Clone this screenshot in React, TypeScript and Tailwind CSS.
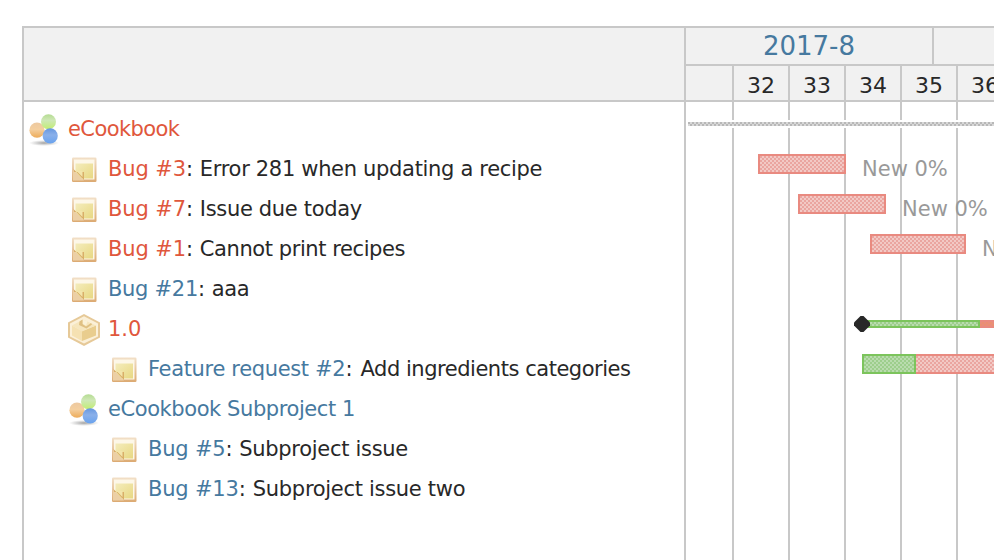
import type { ReactNode } from 'react';

const red = 'text-[#e0573c]';
const blue = 'text-[#46799f]';

function ProjectIcon() {
  return (
    <svg viewBox="0 0 32 32" className="size-8 shrink-0">
      <defs>
        <linearGradient id="og" x2="0" y2="1"><stop stopColor="#edc9a0" /><stop offset=".45" stopColor="#f4cf9f" /><stop offset="1" stopColor="#edab58" /></linearGradient>
        <linearGradient id="gg" x2="0" y2="1"><stop stopColor="#b5dc93" /><stop offset=".4" stopColor="#cfe8b6" /><stop offset="1" stopColor="#c1ed73" /></linearGradient>
        <linearGradient id="bg" x2="0" y2="1"><stop stopColor="#6596df" /><stop offset=".45" stopColor="#8ab0ea" /><stop offset="1" stopColor="#69a2ee" /></linearGradient>
        <radialGradient id="sh"><stop stopColor="#777" stopOpacity=".7" /><stop offset="1" stopColor="#999" stopOpacity="0" /></radialGradient>
      </defs>
      <ellipse cx="16" cy="29" rx="15" ry="3" fill="url(#sh)" />
      <circle cx="9" cy="16.2" r="7.6" fill="url(#og)" />
      <circle cx="20.5" cy="7.8" r="7.5" fill="url(#gg)" />
      <circle cx="22.2" cy="21.8" r="7.6" fill="url(#bg)" />
    </svg>
  );
}

function TicketIcon() {
  return (
    <svg viewBox="0 0 32 32" className="size-8 shrink-0">
      <defs>
        <linearGradient id="frame" x2="0" y2="1"><stop stopColor="#f2e0c8" /><stop offset="1" stopColor="#dcaa72" /></linearGradient>
        <linearGradient id="note" x2="1" y2="1"><stop stopColor="#f4ecbc" /><stop offset="1" stopColor="#e8d882" /></linearGradient>
      </defs>
      <rect x="4" y="3.5" width="24.5" height="24.5" rx="1.2" fill="url(#frame)" />
      <rect x="6" y="5.5" width="20.5" height="20" fill="#fdf7e8" />
      <path d="M7.5 9.5H25V24.5H7.5Z" fill="url(#note)" />
      <path d="M5 15.5L16 26.5H5Z" fill="#ecd0a6" />
      <path d="M5.5 15L16 26V18H6Z" fill="#d9ae68" />
      <path d="M8.5 17L14.5 17V23Z" fill="#f3e6ac" />
    </svg>
  );
}

function PackageIcon() {
  return (
    <svg viewBox="0 0 32 32" className="size-8 shrink-0">
      <path d="M16 0L32 8.5V23.5L16 32L0 23.5V8.5Z" fill="#e6c998" />
      <path d="M16 2.2L30 9.6V22.4L16 29.6L2 22.4V9.6Z" fill="#fbf0d8" />
      <path d="M4 11.5L14 17V27L4 21.5Z" fill="#f5e1b2" />
      <path d="M28 11.5L14 17V27L28 21.5Z" fill="#e9cd8e" />
      <path d="M4 11.5L15 5.5L28 11.5L14 17.5Z" fill="#f6e6be" />
      <path d="M11.5 7.5L14.5 5.5V10L18 12.5L23 9L24 10.5L18.5 14.5L11 11Z" fill="#dfc083" />
      <path d="M15 5.5L19.5 7.5L18 11.5L15 10Z" fill="#fbf2d8" />
    </svg>
  );
}

function Row({ icon, indent, children }: { icon: ReactNode; indent: string; children: ReactNode }) {
  return (
    <div className={`flex h-10 items-center gap-2 whitespace-pre ${indent}`}>
      <div className="pt-[3px]">{icon}</div>
      <div className="flex pt-1">{children}</div>
    </div>
  );
}

const issue = <TicketIcon />;

const lateBar = 'h-5 shrink-0 border-2 border-[#e98a80] bg-[repeating-conic-gradient(#f2c9c5_0_25%,#eaa5a0_0_50%)] bg-[length:4px_4px]';
const doneFill = 'bg-[repeating-conic-gradient(#b9dcae_0_25%,#9dce8c_0_50%)] bg-[length:4px_4px]';

function WeekCell({ children }: { children: ReactNode }) {
  return <div className="w-14 shrink-0 border-r-2 border-[#c8c8c8] text-center text-[22px] leading-[39px]">{children}</div>;
}

function GridLine({ first }: { first?: boolean }) {
  return <div className={`${first ? 'w-12' : 'w-14'} h-full shrink-0 border-r-2 border-[#c8c8c8]`} />;
}

export default function App() {
  return (
    <div className="h-[560px] w-[994px] overflow-hidden bg-white pt-[26px] pl-[22px] font-['DejaVu_Sans',Verdana,sans-serif] text-[21px] text-[#282828]">
      <div className="flex h-full w-[972px] border-t-2 border-l-2 border-[#c8c8c8]">
        <section className="flex w-[662px] shrink-0 flex-col border-r-2 border-[#c8c8c8]">
          <div className="h-[74px] shrink-0 border-b-2 border-[#c8c8c8] bg-[#f1f1f1]" />
          <div className="pt-[6px]">
            <Row icon={<ProjectIcon />} indent="pl-1"><span className={`${red} tracking-[-0.6px]`}>eCookbook</span></Row>
            <Row icon={issue} indent="pl-11"><span className={`${red} tracking-[-0.1px]`}>Bug #3</span><span>: </span><span className="tracking-[-0.32px]">Error 281 when updating a recipe</span></Row>
            <Row icon={issue} indent="pl-11"><span className={`${red} tracking-[-0.1px]`}>Bug #7</span><span>: </span><span className="tracking-[-0.33px]">Issue due today</span></Row>
            <Row icon={issue} indent="pl-11"><span className={`${red} tracking-[-0.1px]`}>Bug #1</span><span>: </span><span className="tracking-[-0.42px]">Cannot print recipes</span></Row>
            <Row icon={issue} indent="pl-11"><span className={`${blue} tracking-[-0.3px]`}>Bug #21</span><span>: </span><span className="tracking-[-0.4px]">aaa</span></Row>
            <Row icon={<PackageIcon />} indent="pl-11"><span className={red}>1.0</span></Row>
            <Row icon={issue} indent="pl-[84px]"><span className={`${blue} tracking-[-0.34px]`}>Feature request #2</span><span className="tracking-[0.7px]">: </span><span className="tracking-[-0.47px]">Add ingredients categories</span></Row>
            <Row icon={<ProjectIcon />} indent="pl-11"><span className={`${blue} tracking-[-0.42px]`}>eCookbook Subproject 1</span></Row>
            <Row icon={issue} indent="pl-[84px]"><span className={`${blue} tracking-[-0.2px]`}>Bug #5</span><span>: </span><span className="tracking-[-0.3px]">Subproject issue</span></Row>
            <Row icon={issue} indent="pl-[84px]"><span className={`${blue} tracking-[-0.2px]`}>Bug #13</span><span className="tracking-[0.2px]">: </span><span className="tracking-[-0.3px]">Subproject issue two</span></Row>
          </div>
        </section>

        <section className="flex w-[308px] shrink-0 flex-col overflow-hidden">
          <div className="flex h-[38px] shrink-0 border-b-2 border-[#c8c8c8] bg-[#f1f1f1]">
            <div className={`w-[248px] border-r-2 border-[#c8c8c8] text-center text-[26px] leading-[37px] ${blue}`}>2017-8</div>
          </div>
          <div className="flex h-9 shrink-0 overflow-hidden border-b-2 border-[#c8c8c8] bg-[#f1f1f1]">
            <div className="w-12 shrink-0 border-r-2 border-[#c8c8c8]" />
            <WeekCell>32</WeekCell>
            <WeekCell>33</WeekCell>
            <WeekCell>34</WeekCell>
            <WeekCell>35</WeekCell>
            <WeekCell>36</WeekCell>
          </div>
          <div className="relative min-h-0 flex-1 overflow-hidden">
            <div className="absolute inset-0 flex">
              <GridLine first />
              <GridLine />
              <GridLine />
              <GridLine />
              <GridLine />
            </div>
            <div className="relative flex flex-col whitespace-nowrap text-[#999]">
              <div className="h-[44px] pt-[18px]">
                <div className="h-2 bg-white py-[2px] pl-[2px]">
                  <div className="h-1 bg-[repeating-conic-gradient(#d8d8d8_0_25%,#b8b8b8_0_50%)] bg-[length:4px_4px]" />
                </div>
              </div>
              <div className="flex h-10 items-start gap-4 pt-2 pl-[72px]"><div className={`w-[88px] ${lateBar}`} /><span className="leading-[31px]">New 0%</span></div>
              <div className="flex h-10 items-start gap-4 pt-2 pl-[112px]"><div className={`w-[88px] ${lateBar}`} /><span className="leading-[31px]">New 0%</span></div>
              <div className="flex h-10 items-start gap-4 pt-2 pl-[184px]"><div className={`w-24 ${lateBar}`} /><span className="leading-[31px]">New 0%</span></div>
              <div className="h-10" />
              <div className="flex h-10 items-start pt-[10px] pl-[168px]">
                <svg viewBox="0 0 16 16" className="relative z-10 size-4 shrink-0"><path d="M6.5 0H9.5L16 6.5V9.5L9.5 16H6.5L0 9.5V6.5Z" fill="#282828" /></svg>
                <div className={`mt-1 -ml-2 h-2 w-[118px] shrink-0 border-2 border-[#7cc45c] ${doneFill}`} />
                <div className="mt-1 h-2 w-10 shrink-0 border-y-2 border-[#e98a80] bg-[repeating-conic-gradient(#eb9070_0_25%,#e88d7d_0_50%)] bg-[length:4px_4px]" />
              </div>
              <div className="flex h-10 items-start pt-2 pl-[176px]">
                <div className={`h-5 w-[54px] shrink-0 border-2 border-[#7cc45c] ${doneFill}`} />
                <div className={`w-[100px] border-l-0 ${lateBar}`} />
              </div>
            </div>
          </div>
        </section>
      </div>
    </div>
  );
}
